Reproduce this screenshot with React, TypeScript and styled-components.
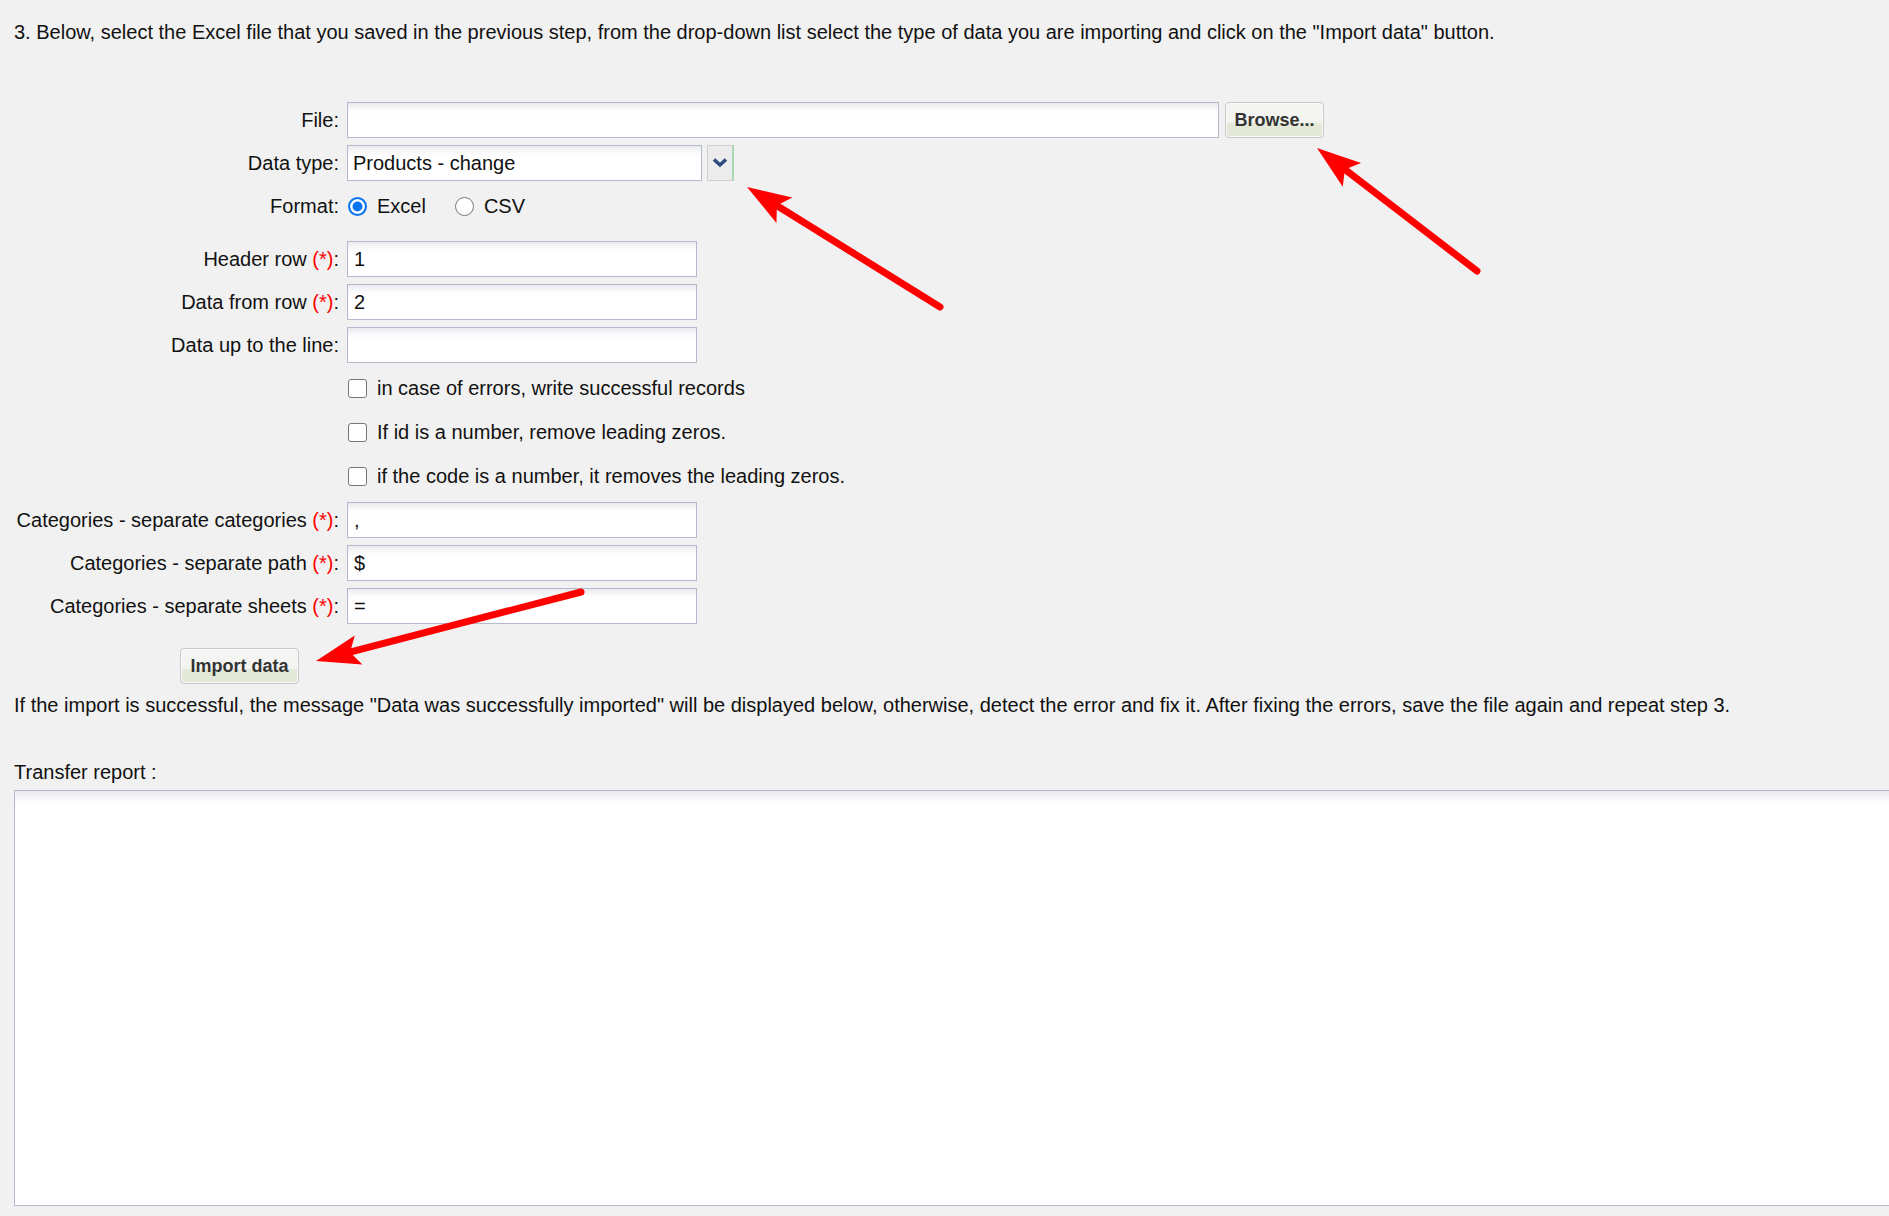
import React from "react";
import styled, { createGlobalStyle, css } from "styled-components";

const GlobalStyle = createGlobalStyle`
  html, body {
    margin: 0;
    padding: 0;
    background: #f1f1f1;
    overflow: hidden;
  }
  body {
    font-family: "Liberation Sans", Arial, sans-serif;
    font-size: 20px;
    color: #111;
  }
`;

type Arrow = { tip: [number, number]; tail: [number, number] };

const arrows: Arrow[] = [
  { tip: [747, 187], tail: [940, 307] },
  { tip: [1317, 148], tail: [1477, 271] },
  { tip: [316, 661], tail: [581, 592] },
];

const Required = () => (
  <>
    {" "}
    <Star>(*)</Star>:
  </>
);

const ArrowShape: React.FC<Arrow> = ({ tip, tail }) => {
  const dx = tip[0] - tail[0];
  const dy = tip[1] - tail[1];
  const len = Math.hypot(dx, dy);
  const ux = dx / len;
  const uy = dy / len;
  const headLen = 44;
  const half = 15;
  const bx = tip[0] - ux * headLen;
  const by = tip[1] - uy * headLen;
  const nx = tip[0] - ux * headLen * 0.8;
  const ny = tip[1] - uy * headLen * 0.8;
  const pts = [
    [tip[0], tip[1]],
    [bx - uy * half, by + ux * half],
    [nx, ny],
    [bx + uy * half, by - ux * half],
  ]
    .map((p) => p.join(","))
    .join(" ");
  return (
    <g>
      <line
        x1={tail[0]}
        y1={tail[1]}
        x2={nx + ux * 4}
        y2={ny + uy * 4}
        stroke="#ff0000"
        strokeWidth={7}
        strokeLinecap="round"
      />
      <polygon points={pts} fill="#ff0000" />
    </g>
  );
};

const App: React.FC = () => {
  return (
    <Page>
      <GlobalStyle />
      <Intro>
        3. Below, select the Excel file that you saved in the previous step, from
        the drop-down list select the type of data you are importing and click on
        the "Import data" button.
      </Intro>

      <Form>
        <FormRow>
          <Label>File:</Label>
          <TextBox $width={872} />
          <Button>Browse...</Button>
        </FormRow>

        <FormRow>
          <Label>Data type:</Label>
          <SelectBox>Products - change</SelectBox>
          <SelectToggle>
            <svg width="16" height="11" viewBox="0 0 16 11">
              <path
                d="M2 2.5 L8 8 L14 2.5"
                fill="none"
                stroke="#2c4a7c"
                strokeWidth="3.5"
              />
            </svg>
          </SelectToggle>
        </FormRow>

        <FormRow $extra={10}>
          <Label>Format:</Label>
          <Choice>
            <Radio $checked />
            Excel
          </Choice>
          <Choice $gap={28}>
            <Radio />
            CSV
          </Choice>
        </FormRow>

        <FormRow>
          <Label>
            Header row<Required />
          </Label>
          <TextBox>1</TextBox>
        </FormRow>

        <FormRow>
          <Label>
            Data from row<Required />
          </Label>
          <TextBox>2</TextBox>
        </FormRow>

        <FormRow>
          <Label>Data up to the line:</Label>
          <TextBox />
        </FormRow>

        <FormRow $height={37}>
          <Label />
          <Choice>
            <CheckBox />
            in case of errors, write successful records
          </Choice>
        </FormRow>

        <FormRow $height={37}>
          <Label />
          <Choice>
            <CheckBox />
            If id is a number, remove leading zeros.
          </Choice>
        </FormRow>

        <FormRow $height={37}>
          <Label />
          <Choice>
            <CheckBox />
            if the code is a number, it removes the leading zeros.
          </Choice>
        </FormRow>

        <FormRow>
          <Label>
            Categories - separate categories<Required />
          </Label>
          <TextBox>,</TextBox>
        </FormRow>

        <FormRow>
          <Label>
            Categories - separate path<Required />
          </Label>
          <TextBox>$</TextBox>
        </FormRow>

        <FormRow>
          <Label>
            Categories - separate sheets<Required />
          </Label>
          <TextBox>=</TextBox>
        </FormRow>
      </Form>

      <ImportRow>
        <Button $wide>Import data</Button>
      </ImportRow>

      <Note>
        If the import is successful, the message "Data was successfully imported"
        will be displayed below, otherwise, detect the error and fix it. After
        fixing the errors, save the file again and repeat step 3.
      </Note>

      <ReportLabel>Transfer report :</ReportLabel>
      <ReportArea />

      <Overlay width="1889" height="1216" viewBox="0 0 1889 1216">
        {arrows.map((a, i) => (
          <ArrowShape key={i} {...a} />
        ))}
      </Overlay>
    </Page>
  );
};

export default App;

const Page = styled.div`
  position: relative;
  padding: 21px 0 0 14px;
  height: 1216px;
  box-sizing: border-box;
`;

const Intro = styled.p`
  margin: 0;
  line-height: 23px;
  white-space: nowrap;
`;

const Form = styled.div`
  display: flex;
  flex-direction: column;
  gap: 7px;
  margin-top: 58px;
`;

type FormRowProps = {
  $height?: number;
  $extra?: number;
};

const FormRow = styled.div<FormRowProps>`
  display: flex;
  align-items: center;
  height: ${(p) => p.$height ?? 36}px;
  margin-bottom: ${(p) => p.$extra ?? 0}px;
`;

const Label = styled.label`
  width: 325px;
  flex-shrink: 0;
  margin-right: 8px;
  text-align: right;
  line-height: 23px;
  white-space: nowrap;
`;

const Star = styled.span`
  color: #f00;
`;

const fieldLook = css`
  box-sizing: border-box;
  height: 36px;
  border: 1px solid #b5b9cc;
  background: linear-gradient(to bottom, #e9eaee 0px, #fbfbfc 7px, #fff 12px);
  line-height: 34px;
  white-space: nowrap;
`;

const TextBox = styled.div<{ $width?: number }>`
  ${fieldLook}
  width: ${(p) => p.$width ?? 350}px;
  padding: 0 6px;
`;

const SelectBox = styled.div`
  ${fieldLook}
  width: 355px;
  padding: 0 5px;
`;

const SelectToggle = styled.div`
  box-sizing: border-box;
  width: 27px;
  height: 36px;
  margin-left: 5px;
  display: flex;
  align-items: center;
  justify-content: center;
  padding-bottom: 2px;
  background: #ececec;
  border: 1px solid #cfd0d6;
  border-right: 2px solid #aad9b4;
`;

const Button = styled.button<{ $wide?: boolean }>`
  box-sizing: border-box;
  height: 36px;
  width: ${(p) => (p.$wide ? 119 : 99)}px;
  margin-left: ${(p) => (p.$wide ? 0 : 6)}px;
  padding: 0;
  border: 1px solid #c9c9c9;
  border-radius: 4px;
  box-shadow: inset 0 0 0 1px #fafafa;
  background: linear-gradient(
    to bottom,
    #f6f6f4 0%,
    #f2f3ef 58%,
    #e3e8d9 59%,
    #e2e7d7 100%
  );
  font-family: "Liberation Sans", Arial, sans-serif;
  font-weight: bold;
  font-size: 18px;
  color: #333;
`;

const Choice = styled.div<{ $gap?: number }>`
  display: flex;
  align-items: center;
  gap: 10px;
  margin-left: ${(p) => p.$gap ?? 0}px;
  white-space: nowrap;
  line-height: 23px;
`;

const Radio = styled.span<{ $checked?: boolean }>`
  box-sizing: border-box;
  width: 19px;
  height: 19px;
  margin-left: 1px;
  border-radius: 50%;
  background: #fff;
  ${(p) =>
    p.$checked
      ? css`
          border: 2px solid #0a75f0;
          box-shadow: inset 0 0 0 2.5px #fff, inset 0 0 0 10px #0a75f0;
        `
      : css`
          border: 1.5px solid #767676;
        `}
`;

const CheckBox = styled.span`
  box-sizing: border-box;
  width: 19px;
  height: 19px;
  margin-left: 1px;
  border: 1.5px solid #767676;
  border-radius: 3px;
  background: #fff;
`;

const ImportRow = styled.div`
  margin: 24px 0 0 166px;
  height: 36px;
`;

const Note = styled.p`
  margin: 10px 0 0;
  line-height: 23px;
  white-space: nowrap;
`;

const ReportLabel = styled.p`
  margin: 44px 0 0;
  line-height: 23px;
`;

const ReportArea = styled.div`
  box-sizing: border-box;
  margin-top: 6px;
  width: 1900px;
  height: 416px;
  border: 1px solid #b5b9cc;
  border-right: none;
  background: linear-gradient(to bottom, #e9eaee 0px, #fbfbfc 10px, #fff 16px);
`;

const Overlay = styled.svg`
  position: absolute;
  top: 0;
  left: 0;
  pointer-events: none;
`;
